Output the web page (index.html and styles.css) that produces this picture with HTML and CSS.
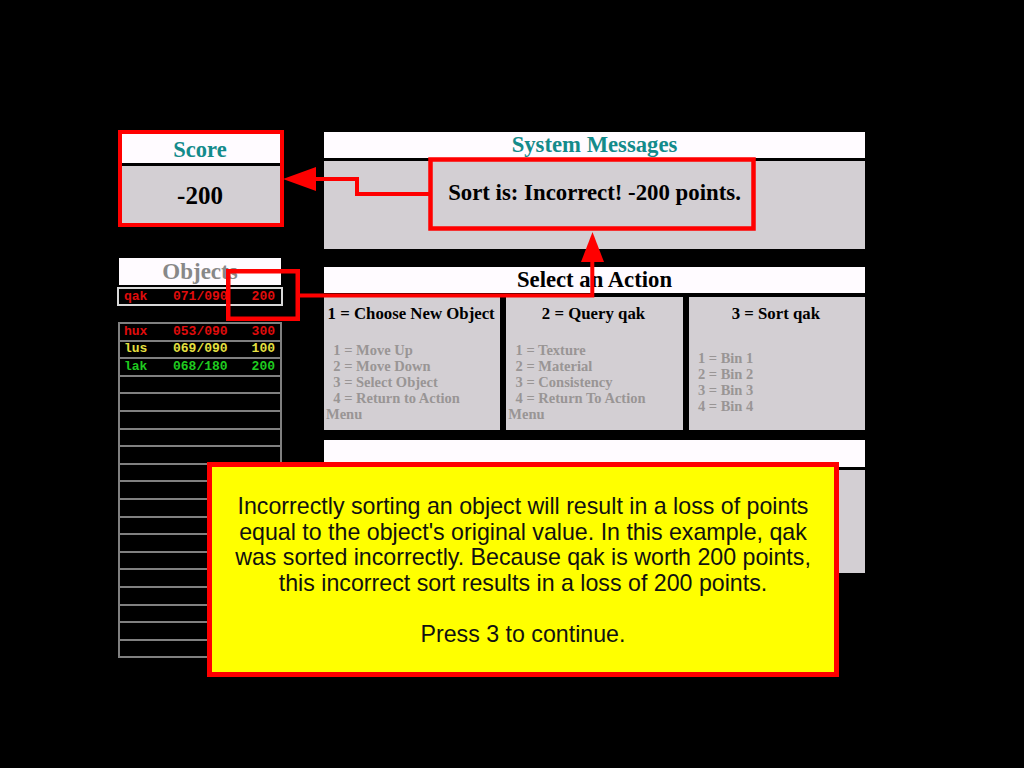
FILE: index.html
```html
<!DOCTYPE html>
<html>
<head>
<meta charset="utf-8">
<title>Sort tutorial</title>
<link rel="stylesheet" href="styles.css">
</head>
<body>
<div class="screen">
  <div class="layout">
    <div class="left">
      <section class="score">
        <div class="score-hdr">Score</div>
        <div class="score-body">-200</div>
      </section>
      <div class="obj-hdr">Objects</div>
      <div class="row current c-red"><span>qak</span><span>071/090</span><span class="pts">200</span></div>
      <div class="list">
        <div class="row c-red"><span>hux</span><span>053/090</span><span class="pts">300</span></div>
        <div class="row c-yellow"><span>lus</span><span>069/090</span><span class="pts">100</span></div>
        <div class="row c-green"><span>lak</span><span>068/180</span><span class="pts">200</span></div>
        <div class="row"></div><div class="row"></div><div class="row"></div><div class="row"></div>
        <div class="row"></div><div class="row"></div><div class="row"></div><div class="row"></div>
        <div class="row"></div><div class="row"></div><div class="row"></div><div class="row"></div>
        <div class="row"></div><div class="row"></div><div class="row"></div><div class="row"></div>
      </div>
    </div>
    <div class="right">
      <section class="panel msgs">
        <div class="hdr teal">System Messages</div>
        <div class="msg-body">Sort is: Incorrect! -200 points.</div>
      </section>
      <section class="panel actions">
        <div class="hdr hdr-action">Select an Action</div>
        <div class="cols">
          <div class="col">
            <div class="col-title">1 = Choose New Object</div>
            <div class="col-body"><div class="items">&nbsp;&nbsp;1 = Move Up<br>&nbsp;&nbsp;2 = Move Down<br>&nbsp;&nbsp;3 = Select Object<br>&nbsp;&nbsp;4 = Return to Action Menu</div></div>
          </div>
          <div class="col">
            <div class="col-title">2 = Query qak</div>
            <div class="col-body"><div class="items">&nbsp;&nbsp;1 = Texture<br>&nbsp;&nbsp;2 = Material<br>&nbsp;&nbsp;3 = Consistency<br>&nbsp;&nbsp;4 = Return To Action Menu</div></div>
          </div>
          <div class="col">
            <div class="col-title">3 = Sort qak</div>
            <div class="col-body"><div class="items">&nbsp;&nbsp;1 = Bin 1<br>&nbsp;&nbsp;2 = Bin 2<br>&nbsp;&nbsp;3 = Bin 3<br>&nbsp;&nbsp;4 = Bin 4</div></div>
          </div>
        </div>
      </section>
      <section class="panel extra">
        <div class="hdr hdr-extra"></div>
        <div class="extra-body"></div>
      </section>
    </div>
  </div>

  <svg class="annot" width="1024" height="768" viewBox="0 0 1024 768">
    <rect x="120" y="132" width="162" height="93" fill="none" stroke="#ff0000" stroke-width="4"/>
    <rect x="430.5" y="159.5" width="323" height="69" fill="none" stroke="#ff0000" stroke-width="4.5"/>
    <rect x="228.25" y="271.25" width="69.5" height="47.5" fill="none" stroke="#ff0000" stroke-width="4.5"/>
    <path d="M430 194 H357 V179 H312" fill="none" stroke="#ff0000" stroke-width="4"/>
    <polygon points="283,179 316,167 316,191" fill="#ff0000"/>
    <path d="M300 295.5 H592.3 V258" fill="none" stroke="#ff0000" stroke-width="4"/>
    <polygon points="592.5,232 581,262 604,262" fill="#ff0000"/>
  </svg>

  <div class="tip">Incorrectly sorting an object will result in a loss of points<br>equal to the object's original value. In this example, qak<br>was sorted incorrectly. Because qak is worth 200 points,<br>this incorrect sort results in a loss of 200 points.<br><br>Press 3 to continue.</div>
</div>
</body>
</html>
```
FILE: styles.css
```css
html, body {
  margin: 0;
  padding: 0;
  background: #000;
}
body {
  width: 1024px;
  height: 768px;
  overflow: hidden;
  font-family: "Liberation Serif", "Times New Roman", serif;
}
.screen {
  position: relative;
  width: 1024px;
  height: 768px;
}
.layout {
  display: flex;
  align-items: flex-start;
  gap: 42px;
  padding: 131px 0 0 118px;
}

/* ---------- left column ---------- */
.left {
  width: 164px;
  display: flex;
  flex-direction: column;
}
.score {
  margin: 0 1px;
}
.score-hdr {
  height: 26px;
  padding-top: 6px;
  line-height: 26px;
  background: #fffbff;
  border-bottom: 3px solid #000;
  color: #138b8b;
  font-weight: bold;
  font-size: 22.5px;
  text-align: center;
}
.score-body {
  height: 56px;
  padding-top: 2px;
  line-height: 56px;
  background: #d3cfd3;
  color: #000;
  font-weight: bold;
  font-size: 25px;
  text-align: center;
}
.obj-hdr {
  margin: 34px 1px 0;
  height: 27px;
  line-height: 27px;
  background: #fffbff;
  color: #888888;
  font-weight: bold;
  font-size: 23px;
  text-align: center;
}
.row {
  box-sizing: border-box;
  height: 17.6px;
  display: grid;
  grid-template-columns: 49px 60px 1fr;
  align-items: center;
  padding: 0 5px 0 4px;
  border: 2px solid #808080;
  border-bottom: none;
  font-family: "Liberation Mono", "DejaVu Sans Mono", monospace;
  font-weight: bold;
  font-size: 13px;
  line-height: 14px;
  background: #000;
}
.row .pts {
  text-align: right;
}
.row.current {
  margin: 2px -1px 0;
  height: 19px;
  border: 2px solid #d8d8d8;
  padding: 0 6px 0 5px;
}
.list {
  margin-top: 16px;
  border-bottom: 2px solid #808080;
}
.c-red { color: #e00c0c; }
.c-yellow { color: #e6e040; }
.c-green { color: #1fcc1f; }

/* ---------- right column ---------- */
.right {
  width: 541px;
  margin-top: 1px;
  display: flex;
  flex-direction: column;
}
.hdr {
  height: 26px;
  line-height: 26px;
  background: #fffbff;
  color: #000;
  font-weight: bold;
  font-size: 22.7px;
  text-align: center;
  border-bottom: 3px solid #000;
}
.teal {
  color: #138b8b;
}
.msg-body {
  box-sizing: border-box;
  height: 88px;
  padding-top: 19px;
  line-height: 26px;
  background: #d3cfd3;
  color: #000;
  font-weight: bold;
  font-size: 22.8px;
  text-align: center;
}
.actions {
  margin-top: 18px;
}
.hdr-action {
  border-bottom-width: 4px;
}
.cols {
  display: grid;
  grid-template-columns: repeat(3, 1fr);
  gap: 6px;
  height: 133px;
  background: #000;
}
.col {
  background: #d3cfd3;
  display: flex;
  flex-direction: column;
  padding: 7px 4px 0 2px;
}
.col-title {
  line-height: 20px;
  font-weight: bold;
  font-size: 16.8px;
  color: #000;
  text-align: center;
  white-space: nowrap;
}
.col-body {
  flex: 1;
  display: flex;
  flex-direction: column;
  justify-content: center;
  padding-top: 10px;
}
.items {
  font-weight: bold;
  font-size: 14.5px;
  line-height: 16px;
  color: #999595;
  text-align: left;
}
.extra {
  margin-top: 10px;
}
.hdr-extra {
  height: 27px;
}
.extra-body {
  height: 103px;
  background: #d3cfd3;
}

/* ---------- overlays ---------- */
.annot {
  position: absolute;
  left: 0;
  top: 0;
  pointer-events: none;
}
.tip {
  position: absolute;
  left: 207px;
  top: 462px;
  width: 632px;
  height: 215px;
  box-sizing: border-box;
  border: 5px solid #ff0000;
  background: #ffff00;
  padding-top: 27px;
  text-align: center;
  font-family: "Liberation Sans", Arial, sans-serif;
  font-size: 23.2px;
  line-height: 25.6px;
  color: #111;
}
```
